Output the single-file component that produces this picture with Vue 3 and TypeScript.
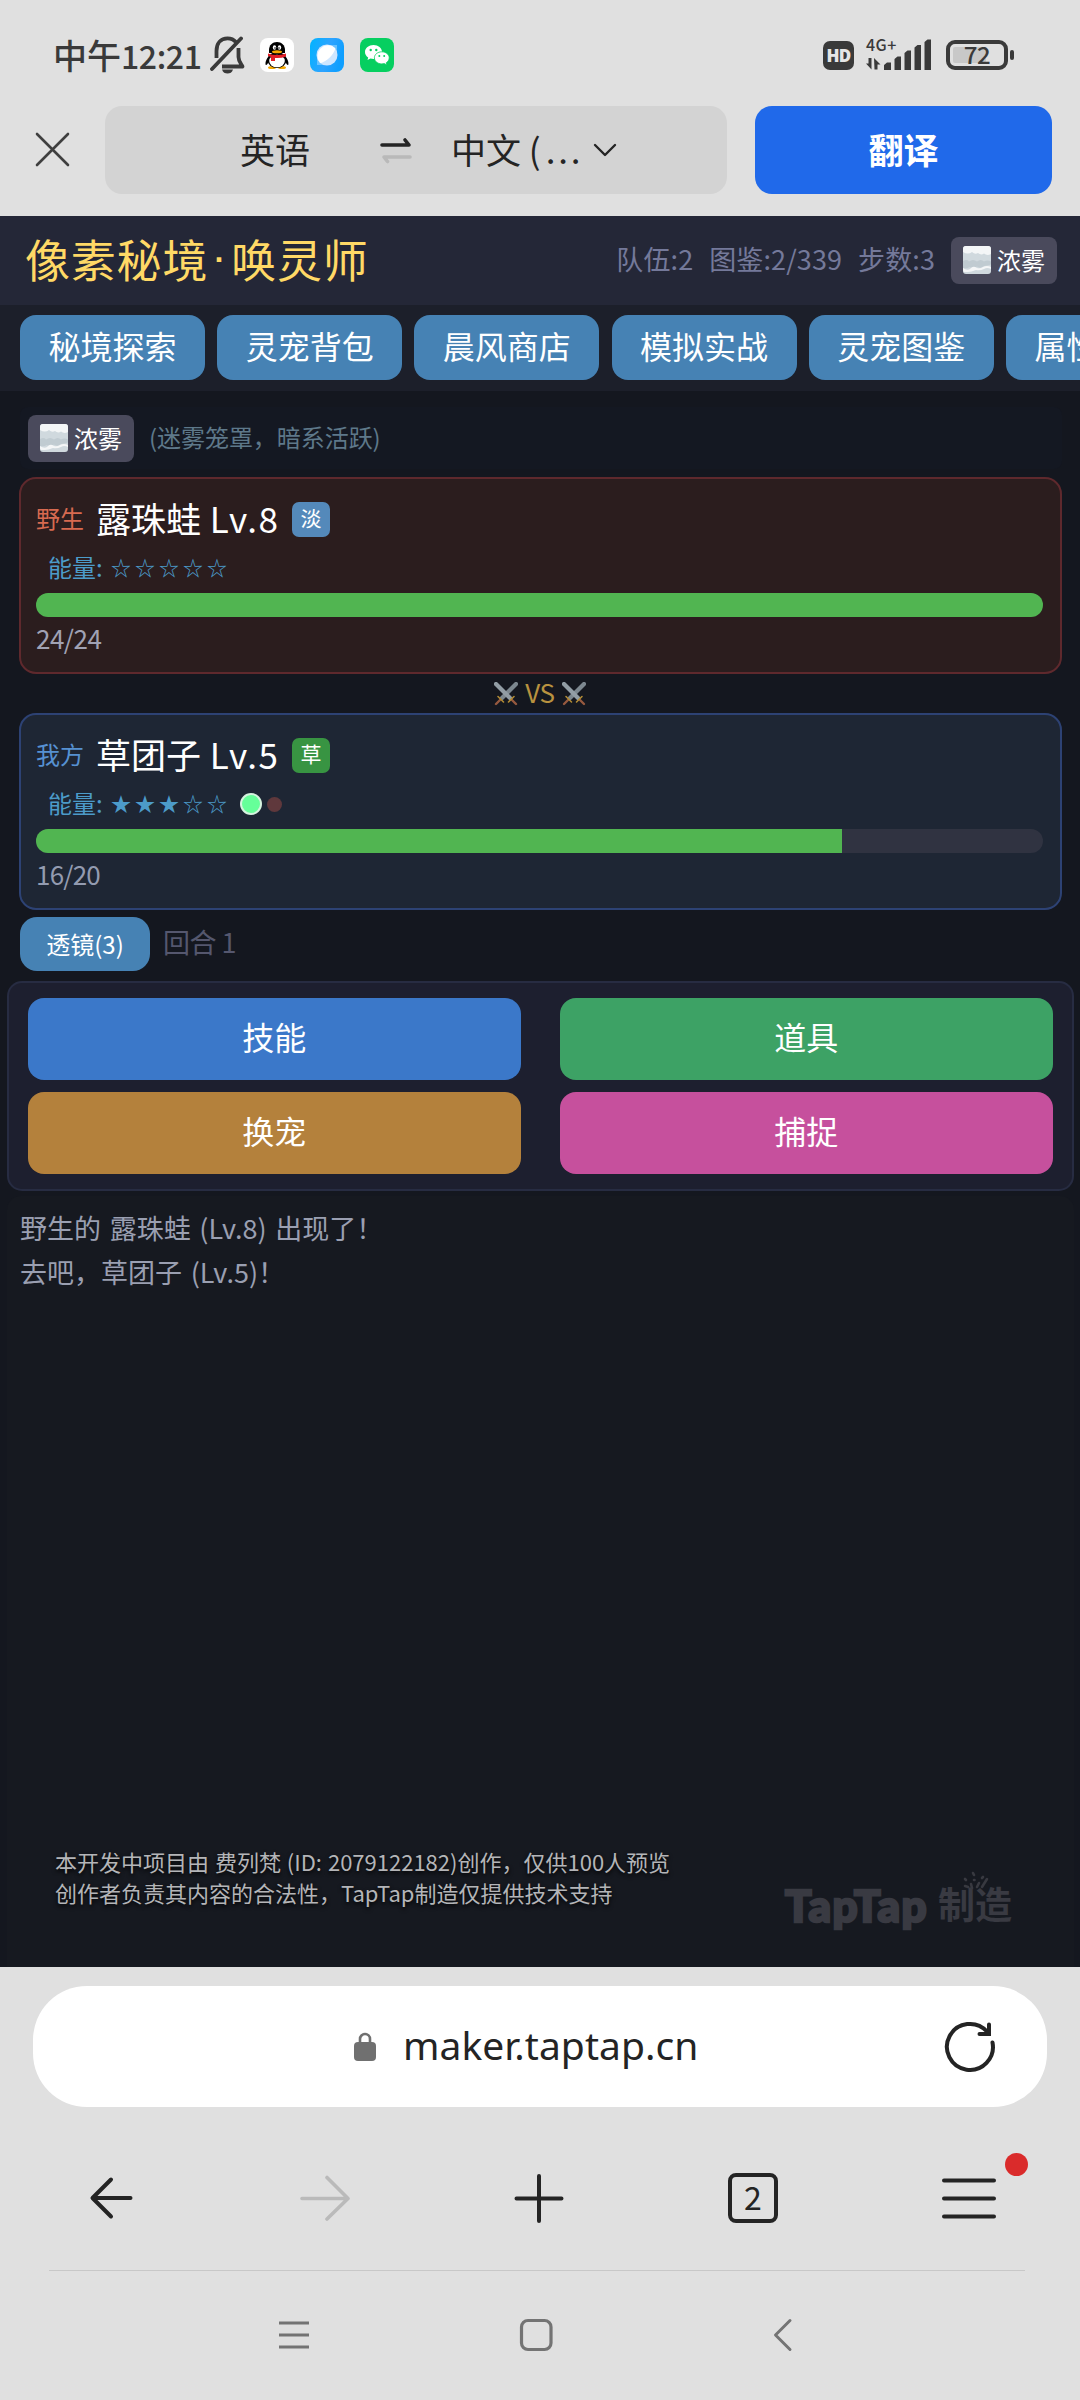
<script setup lang="ts">
interface Pet {
  side: 'wild' | 'mine'
  label: string
  name: string
  level: number
  element: string
  energy: number
  hp: number
  maxHp: number
  dots: boolean
}

const tabs: string[] = ['秘境探索', '灵宠背包', '晨风商店', '模拟实战', '灵宠图鉴', '属性克制']
const stats: string[] = ['队伍:2', '图鉴:2/339', '步数:3']
const pets: Pet[] = [
  { side: 'wild', label: '野生', name: '露珠蛙', level: 8, element: '淡', energy: 0, hp: 24, maxHp: 24, dots: false },
  { side: 'mine', label: '我方', name: '草团子', level: 5, element: '草', energy: 3, hp: 16, maxHp: 20, dots: true },
]
const actions = [
  { text: '技能', cls: 'skill' },
  { text: '道具', cls: 'item' },
  { text: '换宠', cls: 'swap' },
  { text: '捕捉', cls: 'catch' },
]
const log: string[] = ['野生的 露珠蛙 (Lv.8) 出现了！', '去吧，草团子 (Lv.5)！']
const stars = (n: number): string => '★'.repeat(n) + '☆'.repeat(5 - n)
</script>

<template>
  <div class="screen">
    <header class="chrome-top">
      <div class="status">
        <div class="clock"><span>中午</span><span class="digits">12:21</span></div>
        <svg class="bell" width="36" height="40" viewBox="0 0 36 40" fill="none" stroke="#3a3a3a" stroke-width="3.8">
          <path d="M6.5 23V16C6.5 8 11 3.3 17.5 3.3c3.5 0 6.300 1.200 8.300 3.700M28.500 13v9c0 4 2 6 4 9.500H12" stroke-linejoin="round" />
          <path d="M31 3.500 2 34" stroke-linecap="round" />
          <path d="M12 34.500h11c-1 3-3 4-5.500 4s-4.500-1-5.500-4z" fill="#3a3a3a" stroke="none" />
        </svg>
        <svg class="app qq" width="34" height="34" viewBox="0 0 34 34">
          <rect width="34" height="34" rx="8" fill="#fff" />
          <path d="M9 18c-3 3-4 7-3.200 9 .8.5 2-1.500 2.200-2M25 18c3 3 4 7 3.200 9-.8.5-2-1.500-2.200-2" fill="#000" />
          <ellipse cx="12" cy="29.500" rx="4" ry="1.600" fill="#f5a800" /><ellipse cx="22" cy="29.500" rx="4" ry="1.600" fill="#f5a800" />
          <ellipse cx="17" cy="22" rx="9.500" ry="8" fill="#000" /><ellipse cx="17" cy="23" rx="7.800" ry="6.300" fill="#fff" />
          <path d="M9 15V12c0-5 3.500-8 8-8s8 3 8 8v3z" fill="#000" />
          <ellipse cx="14.500" cy="9.500" rx="1.700" ry="2.300" fill="#fff" /><ellipse cx="19.500" cy="9.500" rx="1.700" ry="2.300" fill="#fff" />
          <circle cx="15" cy="10" r=".8" /><circle cx="19" cy="10" r=".8" />
          <ellipse cx="17" cy="13.700" rx="5" ry="1.500" fill="#f5a800" />
          <path d="M8 15.500q9 3 18 0v3q-5 2-11 1.500V23h-4v-4l-3-1z" fill="#e21f26" />
        </svg>
        <svg class="app" width="34" height="34" viewBox="0 0 34 34">
          <defs>
            <linearGradient id="sky" x1="0" y1="0" x2="1" y2="0.300"><stop offset="0" stop-color="#00b4ff" /><stop offset=".6" stop-color="#2ea3ff" /><stop offset="1" stop-color="#0f9fff" /></linearGradient>
          </defs>
          <rect width="34" height="34" rx="8" fill="url(#sky)" />
          <path d="M18 7h9v9M7 18v9h9" fill="#8cd0ff" opacity=".7" />
          <circle cx="17" cy="17" r="10.500" fill="#cfe6ff" />
          <path d="M25.500 10.500A10.500 10.500 0 1 0 10.500 25.300C17 23 23 17.500 25.500 10.500z" fill="#fff" />
        </svg>
        <svg class="app" width="34" height="34" viewBox="0 0 34 34">
          <rect width="34" height="34" rx="8" fill="#06cf60" />
          <path d="M13.500 7C8.800 7 5 10 5 14c0 2.300 1.200 4.200 3.200 5.500L7.500 22l3-1.500c1 .3 2 .4 3 .4C18 21 22 18 22 14S18.200 7 13.500 7z" fill="#fff" />
          <path d="M21.800 13.800c-4.200 0-7.400 2.700-7.400 6 0 3.400 3.200 6.100 7.400 6.100.9 0 1.700-.1 2.500-.3l2.600 1.300-.6-2.200c1.700-1.100 2.900-2.900 2.900-4.900 0-3.300-3.200-6-7.400-6z" fill="#fff" stroke="#06cf60" stroke-width=".8" />
          <g fill="#06cf60"><circle cx="10.700" cy="12" r="1.200" /><circle cx="16.300" cy="12" r="1.200" /><circle cx="19.300" cy="18" r="1" /><circle cx="24.200" cy="18" r="1" /></g>
        </svg>
        <span class="spacer"></span>
        <span class="hd">HD</span>
        <span class="net">
          <span class="net-type">4G+</span>
          <svg width="68" height="32" viewBox="0 0 68 32" fill="#3a3a3a">
            <path d="M0 24.500h2.500V19h3v11.500zM8 19l6.500 6.500h-3v5H8.500z" />
            <path d="M18 31v-5l3-2.500h4V31zM28.500 31V20l3-2.500H35V31zM38.500 31V14l3-2.500H45V31zM48.500 31V8.500l3-2.500H55V31zM58.500 31V3l3-2.500H65V31z" />
          </svg>
        </span>
        <span class="battery"><span class="level"></span><span class="pct">72</span></span>
        <span class="cap"></span>
      </div>
      <div class="translate">
        <svg class="close" width="35" height="36" viewBox="0 0 35 36" stroke="#3f3f3f" stroke-width="2.600" stroke-linecap="round"><path d="M2 2l31 31M33 2 2 33" /></svg>
        <div class="langs">
          <span class="from">英语</span>
          <svg class="exchange" width="32" height="28" viewBox="0 0 32 28" fill="none" stroke-width="3.600" stroke-linecap="round" stroke-linejoin="round">
            <path d="M2 9h27l-4-5" stroke="#242424" /><path d="M30 21H4l3.500 4.500" stroke="#b9b9b9" />
          </svg>
          <span class="to">中文 (<i>...</i></span>
          <svg width="24" height="14" viewBox="0 0 24 14" fill="none" stroke="#242424" stroke-width="2.400" stroke-linecap="round" stroke-linejoin="round"><path d="M2 2l10 10L22 2" /></svg>
        </div>
        <button class="go">翻译</button>
      </div>
    </header>

    <main class="game">
      <div class="titlebar">
        <h1><span>像素秘境</span><b>·</b><span>唤灵师</span></h1>
        <span v-for="s in stats" :key="s" class="stat">{{ s }}</span>
        <span class="weather">
          <svg width="28" height="28" viewBox="0 0 28 28">
            <rect width="28" height="28" rx="3" fill="#d0d9de" />
            <path d="M0 3q0-3 3-3h22q3 0 3 3v5q-4 2-7-.5-3 2-6-.500-3 2-6-1-4 3-9 0z" fill="#f4f6f7" />
            <path d="M0 15q4-2 6 .5 4-3 8 0 4-3 7 0 3-2 7 0v3q-4 1-7 1.500-4 3-7 .5-4 4-7 .5-4 2-7 1z" fill="#c0cbd1" />
            <path d="M0 22q4 3 7 1 3-4 7-1 3 1 6-1 4-2 8 0v2q-4-2-7 0-4 2-8 1-5 2-8 2H1q-1-1-1-2z" fill="#f4f6f7" />
          </svg>浓雾
        </span>
      </div>
      <nav class="tabs"><button v-for="t in tabs" :key="t">{{ t }}</button></nav>

      <div class="weather-row">
        <span class="weather">
          <svg width="28" height="28" viewBox="0 0 28 28">
            <rect width="28" height="28" rx="3" fill="#d0d9de" />
            <path d="M0 3q0-3 3-3h22q3 0 3 3v5q-4 2-7-.5-3 2-6-.500-3 2-6-1-4 3-9 0z" fill="#f4f6f7" />
            <path d="M0 15q4-2 6 .5 4-3 8 0 4-3 7 0 3-2 7 0v3q-4 1-7 1.500-4 3-7 .5-4 4-7 .5-4 2-7 1z" fill="#c0cbd1" />
            <path d="M0 22q4 3 7 1 3-4 7-1 3 1 6-1 4-2 8 0v2q-4-2-7 0-4 2-8 1-5 2-8 2H1q-1-1-1-2z" fill="#f4f6f7" />
          </svg>浓雾
        </span>
        <span class="hint">(迷雾笼罩，暗系活跃)</span>
      </div>

      <template v-for="(p, i) in pets" :key="p.name">
        <section class="pet" :class="p.side">
          <div class="head">
            <span class="side">{{ p.label }}</span>
            <span class="name">{{ p.name }} <em>Lv.{{ p.level }}</em></span>
            <span class="element">{{ p.element }}</span>
          </div>
          <div class="energy">
            <span class="elabel">能量:</span><span class="stars">{{ stars(p.energy) }}</span>
            <template v-if="p.dots"><span class="dot on"></span><span class="dot off"></span></template>
          </div>
          <div class="bar"><div class="fill" :style="{ width: (p.hp / p.maxHp) * 100 + '%' }"></div></div>
          <div class="hp">{{ p.hp }}/{{ p.maxHp }}</div>
        </section>
        <div v-if="i === 0" class="vs">
          <svg v-for="n in 2" :key="n" :class="'sword' + n" width="24" height="24" viewBox="0 0 24 24" stroke-linecap="round">
            <path d="M7.500 16.500 2 22M16.500 16.500 22 22" stroke="#96593f" stroke-width="2.400" />
            <path d="M22 2 8 16" stroke="#7c878f" stroke-width="4.200" /><path d="M2 2l14 14" stroke="#929da5" stroke-width="4.200" />
            <path d="M4 14.500l5.500 5.500M20 14.500 14.500 20" stroke="#b08a35" stroke-width="1.600" />
          </svg>
          <span>VS</span>
        </div>
      </template>

      <div class="tools"><button>透镜(3)</button><span>回合 1</span></div>

      <div class="actions"><button v-for="a in actions" :key="a.text" :class="a.cls">{{ a.text }}</button></div>

      <div class="log">
        <p v-for="l in log" :key="l">{{ l }}</p>
        <div class="legal">
          <div class="legal-text">
            <div>本开发中项目由 费列梵 (ID: 2079122182)创作，仅供100人预览</div>
            <div>创作者负责其内容的合法性，TapTap制造仅提供技术支持</div>
          </div>
          <div class="brand">
            <span class="latin">TapTap</span><span class="han">制造</span>
            <svg class="spark" width="26" height="22" viewBox="0 0 26 22" stroke="#383940" stroke-width="2.600" stroke-linecap="round" fill="none">
              <path d="M2 8l1 1M2 15l3 1M10 2l1 2M8 13l1 4M14 16l2-4M19 16l5-8M19 7l1-1M11 9h.5" />
            </svg>
          </div>
        </div>
      </div>
    </main>

    <footer class="chrome-bottom">
      <div class="address">
        <svg class="lock" width="24" height="30" viewBox="0 0 24 30"><rect x="1" y="10" width="22" height="19" rx="4" fill="#707070" /><path d="M7 11V7a5 5 0 0 1 10 0v4" fill="none" stroke="#707070" stroke-width="2.600" /></svg>
        <span class="url">maker.taptap.cn</span>
        <svg class="reload" width="54" height="54" viewBox="0 0 54 54" fill="none" stroke="#242424" stroke-width="4" stroke-linecap="round">
          <path d="M49.500 22.500A23 23 0 1 1 44 11.500" /><path d="M46 4.500V14H36.500" />
        </svg>
      </div>
      <div class="nav">
        <svg width="50" height="50" viewBox="0 0 50 50" fill="none" stroke="#242424" stroke-width="4" stroke-linecap="round" stroke-linejoin="round"><path d="M25 6.500 6.500 25 25 43.500M7 25h37.500" /></svg>
        <svg width="50" height="50" viewBox="0 0 50 50" fill="none" stroke="#bababa" stroke-width="3.600" stroke-linecap="round" stroke-linejoin="round"><path d="M27 4.500 48 25.500 27 46M2 25.500h45" /></svg>
        <svg width="50" height="50" viewBox="0 0 50 50" fill="none" stroke="#242424" stroke-width="4" stroke-linecap="round"><path d="M25 3v45M2.500 25.500h45" /></svg>
        <span class="tabcount">2</span>
        <span class="menu">
          <svg width="54" height="50" viewBox="0 0 54 50" fill="none" stroke="#242424" stroke-width="4" stroke-linecap="round"><path d="M2 7.500h50M2 25.500h50M2 43.500h50" /></svg>
          <span class="badge"></span>
        </span>
      </div>
      <div class="system">
        <svg width="34" height="34" viewBox="0 0 34 34" fill="none" stroke="#747474" stroke-width="3"><path d="M2 5h30M2 17h30M2 29h30" /></svg>
        <svg class="home" width="34" height="34" viewBox="0 0 34 34" fill="none" stroke="#747474" stroke-width="3.200"><rect x="2.500" y="2.500" width="29.500" height="29" rx="6.500" /></svg>
        <svg width="34" height="34" viewBox="0 0 34 34" fill="none" stroke="#747474" stroke-width="3" stroke-linecap="round" stroke-linejoin="round"><path d="M24 2.500 9.500 17 24 31.500" /></svg>
      </div>
    </footer>
  </div>
</template>

<style>
body { margin: 0; background: #e0e0e0; }
</style>

<style scoped>
.screen { width: 1080px; height: 2400px; overflow: hidden; display: flex; flex-direction: column; background: #e0e0e0; font-family: "Noto Sans CJK SC", "Noto Sans", sans-serif; color: #242424; }
.screen * { box-sizing: border-box; }
svg { flex: none; display: block; }
button { border: 0; padding: 0; font: inherit; color: #fff; flex: none; }
span { white-space: nowrap; }

.chrome-top { height: 216px; flex: none; }
.status { height: 106px; padding: 4px 66px 0 53px; display: flex; align-items: center; color: #3a3a3a; }
.clock { font-size: 34px; line-height: 40px; font-weight: 500; width: 157px; display: flex; align-items: baseline; margin-top: -1px; }
.digits { font-size: 32px; letter-spacing: -0.4px; }
.bell { margin: 0 14px 0 0; }
.app { margin-right: 16px; }
.spacer { flex: 1; }
.hd { width: 31px; height: 29px; border-radius: 7px; background: #3a3a3a; color: #e6e6e6; font: 800 17px/29px "Open Sans", sans-serif; text-align: center; margin-right: 12px; letter-spacing: -0.8px; }
.net { position: relative; width: 68px; height: 32px; margin-right: 12px; }
.net-type { position: absolute; left: 0; top: -4px; font: 500 16px/18px "Noto Sans CJK SC", sans-serif; letter-spacing: 0.4px; }
.battery { position: relative; width: 62px; height: 30px; border: 4px solid #3a3a3a; border-radius: 9px; padding: 3px; }
.level { display: block; width: 33px; height: 16px; background: #c8c8c8; border-radius: 2px; }
.pct { position: absolute; inset: 0; font-size: 24px; line-height: 20px; font-weight: 500; text-align: center; letter-spacing: -0.5px; }
.cap { width: 4px; height: 10px; margin-left: 2px; border-radius: 2px; background: #3a3a3a; }

.translate { display: flex; align-items: center; height: 88px; padding-left: 35px; }
.close { margin-right: 35px; }
.langs { width: 622px; height: 88px; border-radius: 17px; background: #d3d3d3; display: flex; align-items: center; font-size: 35px; line-height: 50px; }
.from { margin: -3px 70px 0 135px; width: 70px; }
.exchange { margin-right: 39px; }
.to { width: 142px; margin-top: -3px; }
.to i { font-style: normal; letter-spacing: 2.800px; margin-left: 5px; }
.go { width: 297px; height: 88px; margin-left: 28px; border-radius: 17px; background: #2069ea; font-size: 35px; font-weight: 700; padding-bottom: 3px; }

.game { height: 1751px; flex: none; background: #14171f; display: flex; flex-direction: column; align-items: stretch; }
.titlebar { height: 89px; flex: none; background: #242737; padding: 0 23px 0 25px; display: flex; align-items: center; }
h1 { margin: -3px auto 0 0; font-size: 45px; line-height: 60px; font-weight: 400; color: #ffd966; letter-spacing: 0.8px; display: flex; }
h1 b { font-weight: 700; font-size: 32px; letter-spacing: 0; width: 23px; text-align: center; font-family: "Liberation Sans", sans-serif; }
.stat { font-size: 27px; line-height: 36px; color: #74799a; margin-right: 16px; margin-top: -3px; letter-spacing: 0.1px; }
.weather { width: 106px; height: 47px; border-radius: 8px; background: #4a4a5c; color: #fff; font-size: 24px; line-height: 44px; display: flex; align-items: center; gap: 6px; padding: 0 0 1px 12px; }
.tabs { height: 86px; flex: none; background: #1c1f2a; padding: 10px 0 0 20px; display: flex; gap: 12.200px; overflow: hidden; }
.tabs button { width: 185px; height: 65px; border-radius: 16px; background: #4682b4; font-size: 32px; padding-bottom: 5px; }
.weather-row { height: 62px; flex: none; margin: 16px 18px 8px 20px; padding-left: 8px; border-radius: 8px; background: #141822; display: flex; align-items: center; }
.hint { color: #5e788a; font-size: 24px; margin-left: 15px; line-height: 36px; margin-top: -2px; letter-spacing: -0.050px; }

.pet { height: 197px; flex: none; margin: 0 18px 0 19px; border: 2px solid; border-radius: 17px; padding: 16px 16px 0 15px; }
.wild { background: #2b1d1e; border-color: #5f292d; }
.mine { background: #1e2634; border-color: #2d4274; }
.head { height: 48px; display: flex; align-items: center; }
.side { font-size: 24px; line-height: 36px; width: 60px; margin-top: -2px; }
.wild .side { color: #d76a50; }
.mine .side { color: #5691d2; }
.name { font-size: 35px; line-height: 46px; color: #fff; width: 196px; margin-top: -3px; }
.name em { font-style: normal; margin-left: 1px; letter-spacing: 1.500px; }
.element { width: 38px; height: 35px; border-radius: 7px; font-size: 21px; line-height: 31px; text-align: center; color: #fff; }
.wild .element { background: #5489ba; }
.mine .element { background: #389442; }
.energy { height: 50px; padding-left: 12px; display: flex; align-items: center; color: #4c9bc9; }
.elabel { font-size: 24px; line-height: 36px; width: 63px; margin-top: -2px; }
.stars { font-size: 20px; line-height: 36px; letter-spacing: 4px; width: 129px; }
.dot { border-radius: 50%; }
.dot.on { width: 22px; height: 22px; background: #66ff99; border: 2px solid #d6f3df; }
.dot.off { width: 15px; height: 15px; background: #5f383c; margin-left: 5px; }
.bar { height: 24px; border-radius: 12px; background: #303341; overflow: hidden; width: 1007px; }
.fill { height: 100%; background: #51b551; }
.hp { font-size: 26px; line-height: 36px; margin-top: 3px; color: #a0a2b4; letter-spacing: -0.5px; }
.mine .hp { color: #939bb0; letter-spacing: -0.8px; }
.vs { height: 39px; flex: none; display: flex; align-items: center; justify-content: center; gap: 8px; font-size: 26px; line-height: 36px; color: #b8923f; }
.vs span { order: 1; margin: -3px -1px 0; letter-spacing: -0.3px; }
.sword2 { order: 2; }

.tools { height: 54px; flex: none; margin: 7px 0 10px 20px; display: flex; align-items: center; gap: 13px; font-size: 27px; color: #55576e; }
.tools button { width: 130px; height: 54px; border-radius: 17px; background: #4682b4; font-size: 24px; padding-bottom: 2px; }
.tools span { line-height: 40px; margin-top: -4px; letter-spacing: -0.5px; }
.actions { height: 210px; flex: none; margin: 0 6px 0 7px; border: 2px solid #272c42; border-radius: 15px; background: #1d1f2f; display: grid; grid-template-columns: 492.500px 492.500px; grid-template-rows: 81.500px 81.500px; gap: 12.500px 39.500px; padding: 15px 0 0 19px; }
.actions button { border-radius: 16px; font-size: 32px; padding-bottom: 6px; }
.skill { background: #3b78c9; }
.item { background: #3da265; }
.swap { background: #b4813c; }
.catch { background: #c6509d; }
.log { flex: 1; margin: 5px 6px 0 7px; border-radius: 14px 14px 0 0; background: #161920; padding: 10px 0 0 13px; display: flex; flex-direction: column; }
.log p { margin: 0; font-size: 27px; line-height: 44px; color: #9a9fb1; word-spacing: 2.600px; }
.legal { margin-top: auto; height: 121px; display: flex; padding-left: 35px; }
.legal-text { width: 730px; font-size: 22px; line-height: 31px; color: #b4b5b8; text-shadow: 0 2px 4px #000; white-space: nowrap; word-spacing: 1px; }
.brand { position: relative; display: flex; color: #393a42; align-items: center; height: 74px; margin-top: 22px; }
.latin { font: 900 44px/60px Lato, sans-serif; width: 153px; letter-spacing: 1.600px; -webkit-text-stroke: 2.500px #393a42; }
.han { font-size: 37px; line-height: 60px; font-weight: 700; margin-top: -4px; }
.spark { position: absolute; left: 178px; top: 3px; }

.chrome-bottom { height: 433px; flex: none; display: flex; flex-direction: column; }
.address { margin: 19px 33px 0; height: 121px; flex: none; border-radius: 54px; background: #fff; display: flex; align-items: center; padding-left: 320px; }
.url { font-family: "Noto Sans", sans-serif; font-size: 39px; line-height: 60px; margin: -3px 0 0 26px; width: 540px; letter-spacing: 0.050px; }
.nav { height: 164px; flex: none; margin: 0 55px 0 49px; border-bottom: 1.500px solid #c8c8c8; display: flex; align-items: center; justify-content: space-between; padding: 19px 29px 0 37px; }
.tabcount { width: 50px; height: 50px; border: 4px solid #242424; border-radius: 8px; font-size: 32px; line-height: 38px; text-align: center; }
.menu { position: relative; }
.badge { position: absolute; width: 23px; height: 23px; border-radius: 50%; background: #da2b2b; left: 63px; top: -20px; }
.system { display: flex; padding: 47px 0 0 277px; }
.home { margin: 0 213px 0 208px; }
</style>
